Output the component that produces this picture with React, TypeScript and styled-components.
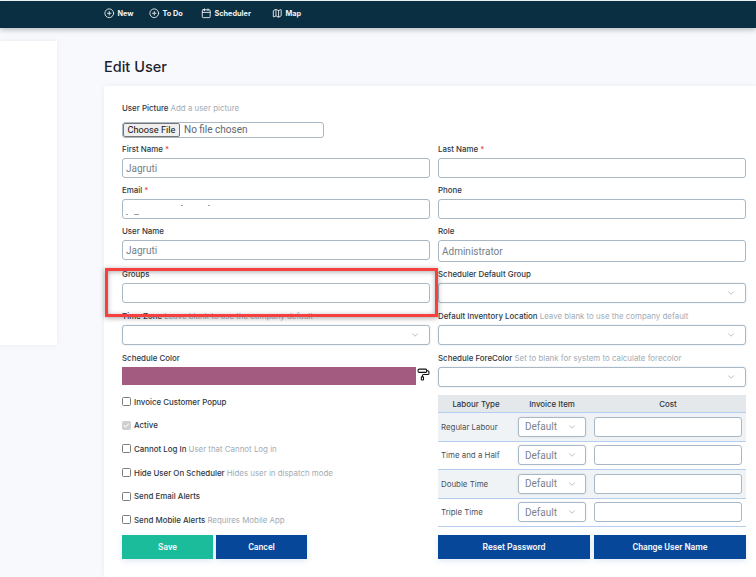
import React from 'react';
import styled, { createGlobalStyle } from 'styled-components';
import { PlusCircle, Calendar, Map as MapIcon, PaintRoller, ChevronDown, Check } from 'lucide-react';

const Global = createGlobalStyle`
  html, body { margin: 0; padding: 0; height: 577px; overflow: hidden; background: #f8f9fc; }
  * { box-sizing: border-box; }
  body { font-family: "Inter", "Noto Sans", sans-serif; color: #2c3340; }
`;

const Page = styled.div`
  width: 756px;
  height: 577px;
  position: relative;
  overflow: hidden;
  display: flex;
  flex-direction: column;
`;
const TopBar = styled.header`
  height: 27px;
  margin-top: 1px;
  background: #0b2f42;
  box-shadow: 0 2px 5px rgba(40, 50, 60, .3);
  display: flex;
  align-items: center;
  padding-left: 104px;
  flex-shrink: 0;
`;
const NavItem = styled.a<{ $w: number }>`
  display: flex;
  align-items: center;
  gap: 3px;
  width: ${p => p.$w}px;
  color: #f0f3f5;
  font-size: 7.3px;
  font-weight: 700;
  margin-top: -2px;
`;
const Body = styled.div`
  flex: 1;
  display: flex;
  min-height: 0;
`;
const SidePanel = styled.aside`
  width: 57px;
  height: 304px;
  margin-top: 13px;
  background: #fff;
  box-shadow: 0 0 5px rgba(120, 130, 160, .12);
  flex-shrink: 0;
`;
const Main = styled.main`
  flex: 1;
  padding-left: 47px;
  min-width: 0;
`;
const Title = styled.h1`
  margin: 0;
  height: 58px;
  padding-top: 30px;
  font: 500 14.5px/18px "Inter", sans-serif;
  color: #1c2430;
`;
const Card = styled.section`
  background: #fff;
  border-radius: 3px 0 0 3px;
  height: 491px;
  padding: 17px 10px 0 18px;
  box-shadow: 0 0 5px rgba(120, 130, 160, .1);
`;
const Label = styled.label`
  display: block;
  height: 10px;
  font-size: 7.9px;
  line-height: 11px;
  font-weight: 500;
  color: #2f3742;
  white-space: nowrap;
`;
const Hint = styled.span`
  font-weight: 400;
  color: #a2abb5;
`;
const Req = styled.span`
  color: #e04a4a;
`;
const FileBox = styled.input`
  display: block;
  width: 202px;
  height: 16px;
  margin: 9px 0 6px;
  padding: 0;
  border: 1px solid #a8b8c4;
  border-radius: 3px;
  background: #fff;
  font: 400 10px/14px "Roboto", sans-serif;
  color: #5c6670;
  overflow: hidden;
  &::file-selector-button {
    height: 14px;
    width: 57px;
    margin: 0 4px 0 0;
    padding: 0;
    font: 400 9.2px/12px "Roboto", sans-serif;
    color: #111;
    background: #efefef;
    border: 1px solid #767676;
    border-radius: 2px;
  }
`;
const Grid = styled.div`
  display: grid;
  grid-template-columns: 308px 308px;
  column-gap: 8px;
`;
const Field = styled.div<{ $h?: number }>`
  height: ${p => p.$h ?? 41}px;
`;
const TextBox = styled.input<{ $tall?: boolean }>`
  display: block;
  width: 100%;
  height: ${p => (p.$tall ? 22 : 20)}px;
  margin-top: 4px;
  padding: 0 3px;
  border: 1px solid #a8b8c4;
  border-radius: 3px;
  background: #fff;
  font: 400 10px "Roboto", sans-serif;
  color: #767f88;
  outline: none;
`;
const Masked = styled.div`
  position: relative;
`;
const Fleck = styled.i<{ $x: number; $y: number; $w: number }>`
  position: absolute;
  left: ${p => p.$x}px;
  top: ${p => p.$y}px;
  width: ${p => p.$w}px;
  height: 1px;
  background: #9aa0a8;
`;
const SelectBox = styled.div<{ $small?: boolean }>`
  display: flex;
  align-items: center;
  justify-content: space-between;
  height: 20px;
  margin-top: ${p => (p.$small ? 0 : 4)}px;
  padding: 0 ${p => (p.$small ? 8 : 9)}px 0 ${p => (p.$small ? 6 : 4)}px;
  border: 1px solid #a8b8c4;
  border-radius: 3px;
  background: #fff;
  font: 400 10px "Roboto", sans-serif;
  color: #7a838c;
  box-shadow: 0 0 2px rgba(120, 140, 160, .25);
  width: ${p => (p.$small ? '68px' : '100%')};
  svg { color: #8e979f; flex-shrink: 0; }
`;
const ColorRow = styled.div`
  display: flex;
  align-items: center;
  margin-top: 4px;
  gap: 1px;
  svg { color: #111; margin-top: -3px; }
`;
const Swatch = styled.div`
  width: 294px;
  height: 18px;
  background: #a45b80;
`;
const Lower = styled.div`
  display: grid;
  grid-template-columns: 308px 308px;
  column-gap: 8px;
  margin-top: -4px;
`;
const CheckRow = styled.div`
  display: flex;
  align-items: center;
  gap: 3px;
  height: 23.6px;
  font-size: 7.9px;
  font-weight: 500;
  color: #2f3742;
  white-space: nowrap;
`;
const Box = styled.span<{ $on?: boolean }>`
  width: 9px;
  height: 9px;
  display: inline-flex;
  align-items: center;
  justify-content: center;
  border-radius: 1.5px;
  border: 1px solid ${p => (p.$on ? '#d0d0d0' : '#7b7b7b')};
  background: ${p => (p.$on ? '#d0d0d0' : '#fff')};
  color: #f6f6f6;
`;
const Buttons = styled.div<{ $cols: string; $gap: number; $mt: number }>`
  display: grid;
  grid-template-columns: ${p => p.$cols};
  column-gap: ${p => p.$gap}px;
  margin-top: ${p => p.$mt}px;
`;
const Btn = styled.button<{ $bg: string }>`
  height: 24px;
  border: 0;
  padding: 0;
  background: ${p => p.$bg};
  color: #f4f7fa;
  font: 600 8.7px "Roboto", sans-serif;
  box-shadow: 0 2px 6px rgba(60, 120, 190, .16);
`;
const Table = styled.div`
  margin-top: 5px;
`;
const HeadRow = styled.div`
  display: grid;
  grid-template-columns: 76px 76px 1fr;
  height: 18px;
  background: #e5e8ea;
  border-bottom: 1px solid #b3cef0;
  align-items: center;
  text-align: center;
  font-size: 7.9px;
  font-weight: 500;
  color: #2f3742;
`;
const Row = styled.div<{ $alt?: boolean }>`
  display: grid;
  grid-template-columns: 77px 76px 148px;
  align-items: center;
  height: 28.5px;
  background: ${p => (p.$alt ? '#f0f3f5' : '#fff')};
  border-bottom: 1px solid #b3cef0;
  font-size: 7.9px;
  font-weight: 400;
  color: #4a525c;
  padding-left: 3px;
`;
const RowName = styled.span`
  white-space: nowrap;
`;
const CostBox = styled.input`
  width: 148px;
  height: 20px;
  border: 1px solid #a8b8c4;
  border-radius: 3px;
  background: #fff;
  outline: none;
`;
const RedFrame = styled.div`
  position: absolute;
  left: 105px;
  top: 268px;
  width: 333px;
  height: 49px;
  border: 3px solid #f6403f;
  box-shadow: 0 1px 5px rgba(50, 50, 50, .45), inset 0 1px 5px rgba(50, 50, 50, .4);
  pointer-events: none;
`;
const Chev = () => <ChevronDown size={10} strokeWidth={1.5} />;

const nav = [
  { t: 'New', w: 45, I: PlusCircle },
  { t: 'To Do', w: 52, I: PlusCircle },
  { t: 'Scheduler', w: 71, I: Calendar },
  { t: 'Map', w: 40, I: MapIcon },
];
const checks: [string, string, boolean][] = [
  ['Invoice Customer Popup', '', false],
  ['Active', '', true],
  ['Cannot Log In', 'User that Cannot Log in', false],
  ['Hide User On Scheduler', 'Hides user in dispatch mode', false],
  ['Send Email Alerts', '', false],
  ['Send Mobile Alerts', 'Requires Mobile App', false],
];
const labour = ['Regular Labour', 'Time and a Half', 'Double Time', 'Triple Time'];

export default function App() {
  return (
    <Page>
      <Global />
      <TopBar>
        {nav.map(({ t, w, I }) => (
          <NavItem key={t} $w={w}>
            <I size={10.5} strokeWidth={2} />
            {t}
          </NavItem>
        ))}
      </TopBar>
      <Body>
        <SidePanel />
        <Main>
          <Title>Edit User</Title>
          <Card>
            <Label>User Picture <Hint>Add a user picture</Hint></Label>
            <FileBox type="file" />
            <Grid>
              <Field><Label>First Name <Req>*</Req></Label><TextBox readOnly value="Jagruti" /></Field>
              <Field><Label>Last Name <Req>*</Req></Label><TextBox readOnly value="" /></Field>
              <Field>
                <Label>Email <Req>*</Req></Label>
                <Masked>
                  <TextBox readOnly value="" />
                  <Fleck $x={4} $y={15} $w={2} />
                  <Fleck $x={12} $y={15} $w={5} />
                  <Fleck $x={59} $y={6} $w={2} />
                  <Fleck $x={86} $y={6} $w={2} />
                </Masked>
              </Field>
              <Field><Label>Phone</Label><TextBox readOnly value="" /></Field>
              <Field $h={43}><Label>User Name</Label><TextBox readOnly value="Jagruti" /></Field>
              <Field $h={43}><Label>Role</Label><TextBox $tall readOnly value="Administrator" /></Field>
              <Field $h={42}><Label>Groups</Label><TextBox readOnly value="" /></Field>
              <Field $h={42}><Label>Scheduler Default Group</Label><SelectBox><span /><Chev /></SelectBox></Field>
              <Field $h={42}><Label>Time Zone <Hint>Leave blank to use the company default</Hint></Label><SelectBox><span /><Chev /></SelectBox></Field>
              <Field $h={42}><Label>Default Inventory Location <Hint>Leave blank to use the company default</Hint></Label><SelectBox><span /><Chev /></SelectBox></Field>
              <Field><Label>Schedule Color</Label><ColorRow><Swatch /><PaintRoller size={13} strokeWidth={2} /></ColorRow></Field>
              <Field><Label>Schedule ForeColor <Hint>Set to blank for system to calculate forecolor</Hint></Label><SelectBox><span /><Chev /></SelectBox></Field>
            </Grid>
            <Lower>
              <div>
                {checks.map(([t, h, on]) => (
                  <CheckRow key={t}>
                    <Box $on={on}>{on && <Check size={7} strokeWidth={3.5} />}</Box>
                    <span>{t} {h && <Hint>{h}</Hint>}</span>
                  </CheckRow>
                ))}
                <Buttons $cols="91px 91px" $gap={3} $mt={3.4}>
                  <Btn $bg="#1abc9c">Save</Btn>
                  <Btn $bg="#07479a">Cancel</Btn>
                </Buttons>
              </div>
              <div>
                <Table>
                  <HeadRow><span>Labour Type</span><span>Invoice Item</span><span>Cost</span></HeadRow>
                  {labour.map((l, i) => (
                    <Row key={l} $alt={i % 2 === 0}>
                      <RowName>{l}</RowName>
                      <SelectBox $small>Default<Chev /></SelectBox>
                      <CostBox readOnly />
                    </Row>
                  ))}
                </Table>
                <Buttons $cols="152px 152px" $gap={4} $mt={8}>
                  <Btn $bg="#07479a">Reset Password</Btn>
                  <Btn $bg="#07479a">Change User Name</Btn>
                </Buttons>
              </div>
            </Lower>
          </Card>
        </Main>
      </Body>
      <RedFrame />
    </Page>
  );
}
